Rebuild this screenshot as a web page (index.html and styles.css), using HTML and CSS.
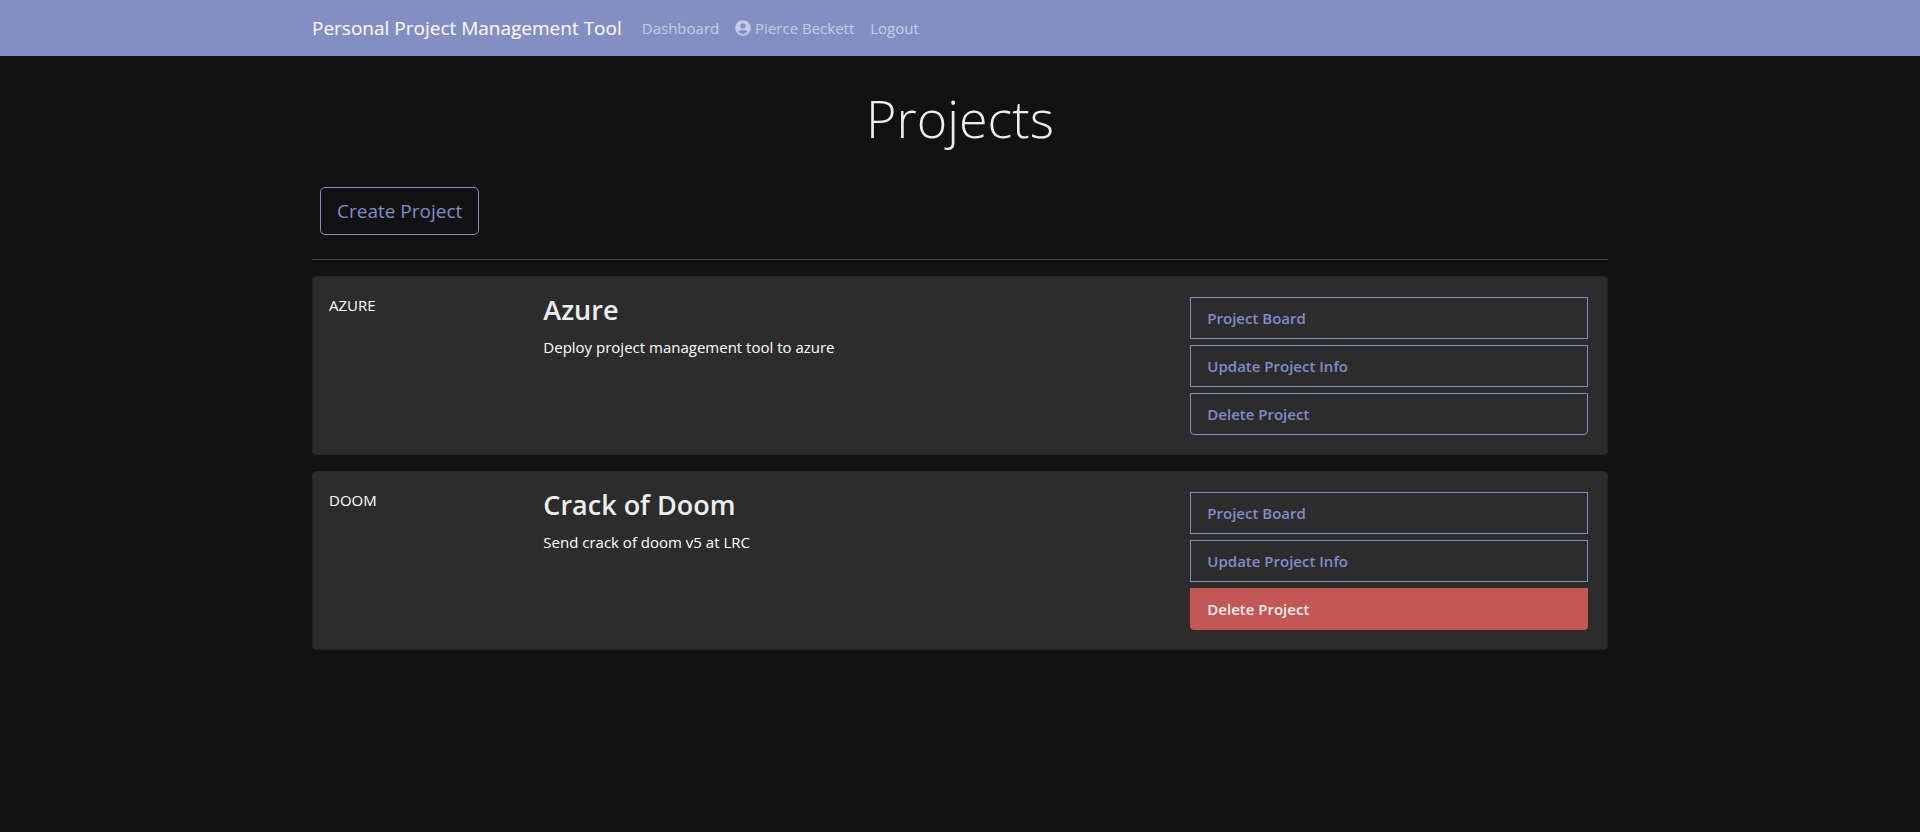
FILE: index.html
```html
<!DOCTYPE html>
<html lang="en">
<head>
<meta charset="utf-8">
<meta name="viewport" content="width=device-width, initial-scale=1">
<title>Projects - Personal Project Management Tool</title>
<link rel="stylesheet" href="styles.css">
</head>
<body>
<nav class="navbar">
  <div class="container navbar-inner">
    <a class="brand" href="#">Personal Project Management Tool</a>
    <a class="nav-link" href="#">Dashboard</a>
    <a class="nav-link" href="#"><svg class="user-icon" viewBox="0 0 496 512" aria-hidden="true"><path fill="currentColor" d="M248 8C111 8 0 119 0 256s111 248 248 248 248-111 248-248S385 8 248 8zm0 96c48.600 0 88 39.400 88 88s-39.400 88-88 88-88-39.400-88-88 39.400-88 88-88zm0 344c-58.700 0-111.300-26.600-146.500-68.200 18.800-35.400 55.600-59.800 98.500-59.800 2.400 0 4.800.4 7.100 1.100 13 4.200 26.600 6.900 40.900 6.900 14.300 0 28-2.700 40.900-6.900 2.300-.7 4.700-1.100 7.100-1.100 42.900 0 79.700 24.400 98.500 59.800C359.300 421.400 306.700 448 248 448z"/></svg> Pierce Beckett</a>
    <a class="nav-link" href="#">Logout</a>
  </div>
</nav>
<main class="container">
  <h1 class="page-title">Projects</h1>
  <a class="create-button" href="#">Create Project</a>
  <hr class="divider">
  <article class="card">
    <span class="card-key">AZURE</span>
    <div class="card-info">
      <h3 class="card-title">Azure</h3>
      <p class="card-text">Deploy project management tool to azure</p>
    </div>
    <div class="card-actions">
      <a class="action" href="#">Project Board</a>
      <a class="action" href="#">Update Project Info</a>
      <a class="action" href="#">Delete Project</a>
    </div>
  </article>
  <article class="card">
    <span class="card-key">DOOM</span>
    <div class="card-info">
      <h3 class="card-title">Crack of Doom</h3>
      <p class="card-text">Send crack of doom v5 at LRC</p>
    </div>
    <div class="card-actions">
      <a class="action" href="#">Project Board</a>
      <a class="action" href="#">Update Project Info</a>
      <a class="action action-danger" href="#">Delete Project</a>
    </div>
  </article>
</main>
</body>
</html>
```
FILE: styles.css
```css
*, *::before, *::after { box-sizing: border-box; }

body {
  margin: 0;
  min-height: 100vh;
  background: #121212;
  color: #fff;
  font-family: "Segoe UI", "Open Sans", "Noto Sans", sans-serif;
  font-size: 15px;
  line-height: 24px;
}

a { color: inherit; text-decoration: none; }

.container {
  width: 100%;
  max-width: 1320px;
  margin: 0 auto;
  padding: 0 12px;
}

.navbar { background: #838fc3; }

.navbar-inner {
  display: flex;
  align-items: center;
  min-height: 56px;
}

.brand {
  margin-right: 12px;
  font-size: 19px;
  line-height: 30px;
}

.nav-link {
  padding: 8px;
  color: rgba(255, 255, 255, 0.55);
}

.user-icon {
  width: 16px;
  height: 16px;
  vertical-align: -2px;
}

.page-title {
  margin: 0;
  padding: 28px 0 36px;
  color: #eceff1;
  font-size: 52px;
  font-weight: 300;
  line-height: 67px;
  text-align: center;
}

.create-button {
  display: inline-block;
  margin-left: 8px;
  padding: 8px 16px;
  border: 1px solid #838fc3;
  border-radius: 5px;
  color: #7f8ccb;
  font-size: 19px;
  line-height: 30px;
  vertical-align: top;
}

.divider {
  margin: 24px 0 16px;
  border: 0;
  border-top: 1px solid #474947;
}

.card {
  display: grid;
  grid-template-columns: repeat(12, minmax(0, 1fr));
  column-gap: 24px;
  margin-bottom: 16px;
  padding: 16px;
  border: 1px solid #262626;
  border-radius: 4px;
  background: #2c2c2c;
}

.card-key { grid-column: span 2; }
.card-info { grid-column: span 6; }
.card-actions {
  grid-column: span 4;
  display: flex;
  flex-direction: column;
  gap: 6px;
  padding: 4px 3px 3px 4px;
}

.card-title {
  margin: 0 0 8px;
  color: #eceff1;
  font-size: 27px;
  font-weight: 600;
  line-height: 34px;
}

.card-text { margin: 0; }

.action {
  padding: 8px 16px;
  border: 1px solid #838fc3;
  color: #7f8ccb;
  font-weight: 600;
}

.action:last-child { border-radius: 0 0 4px 4px; }

.action-danger {
  border-color: #c45653;
  background: #c45653;
  color: #eceff1;
}
```
